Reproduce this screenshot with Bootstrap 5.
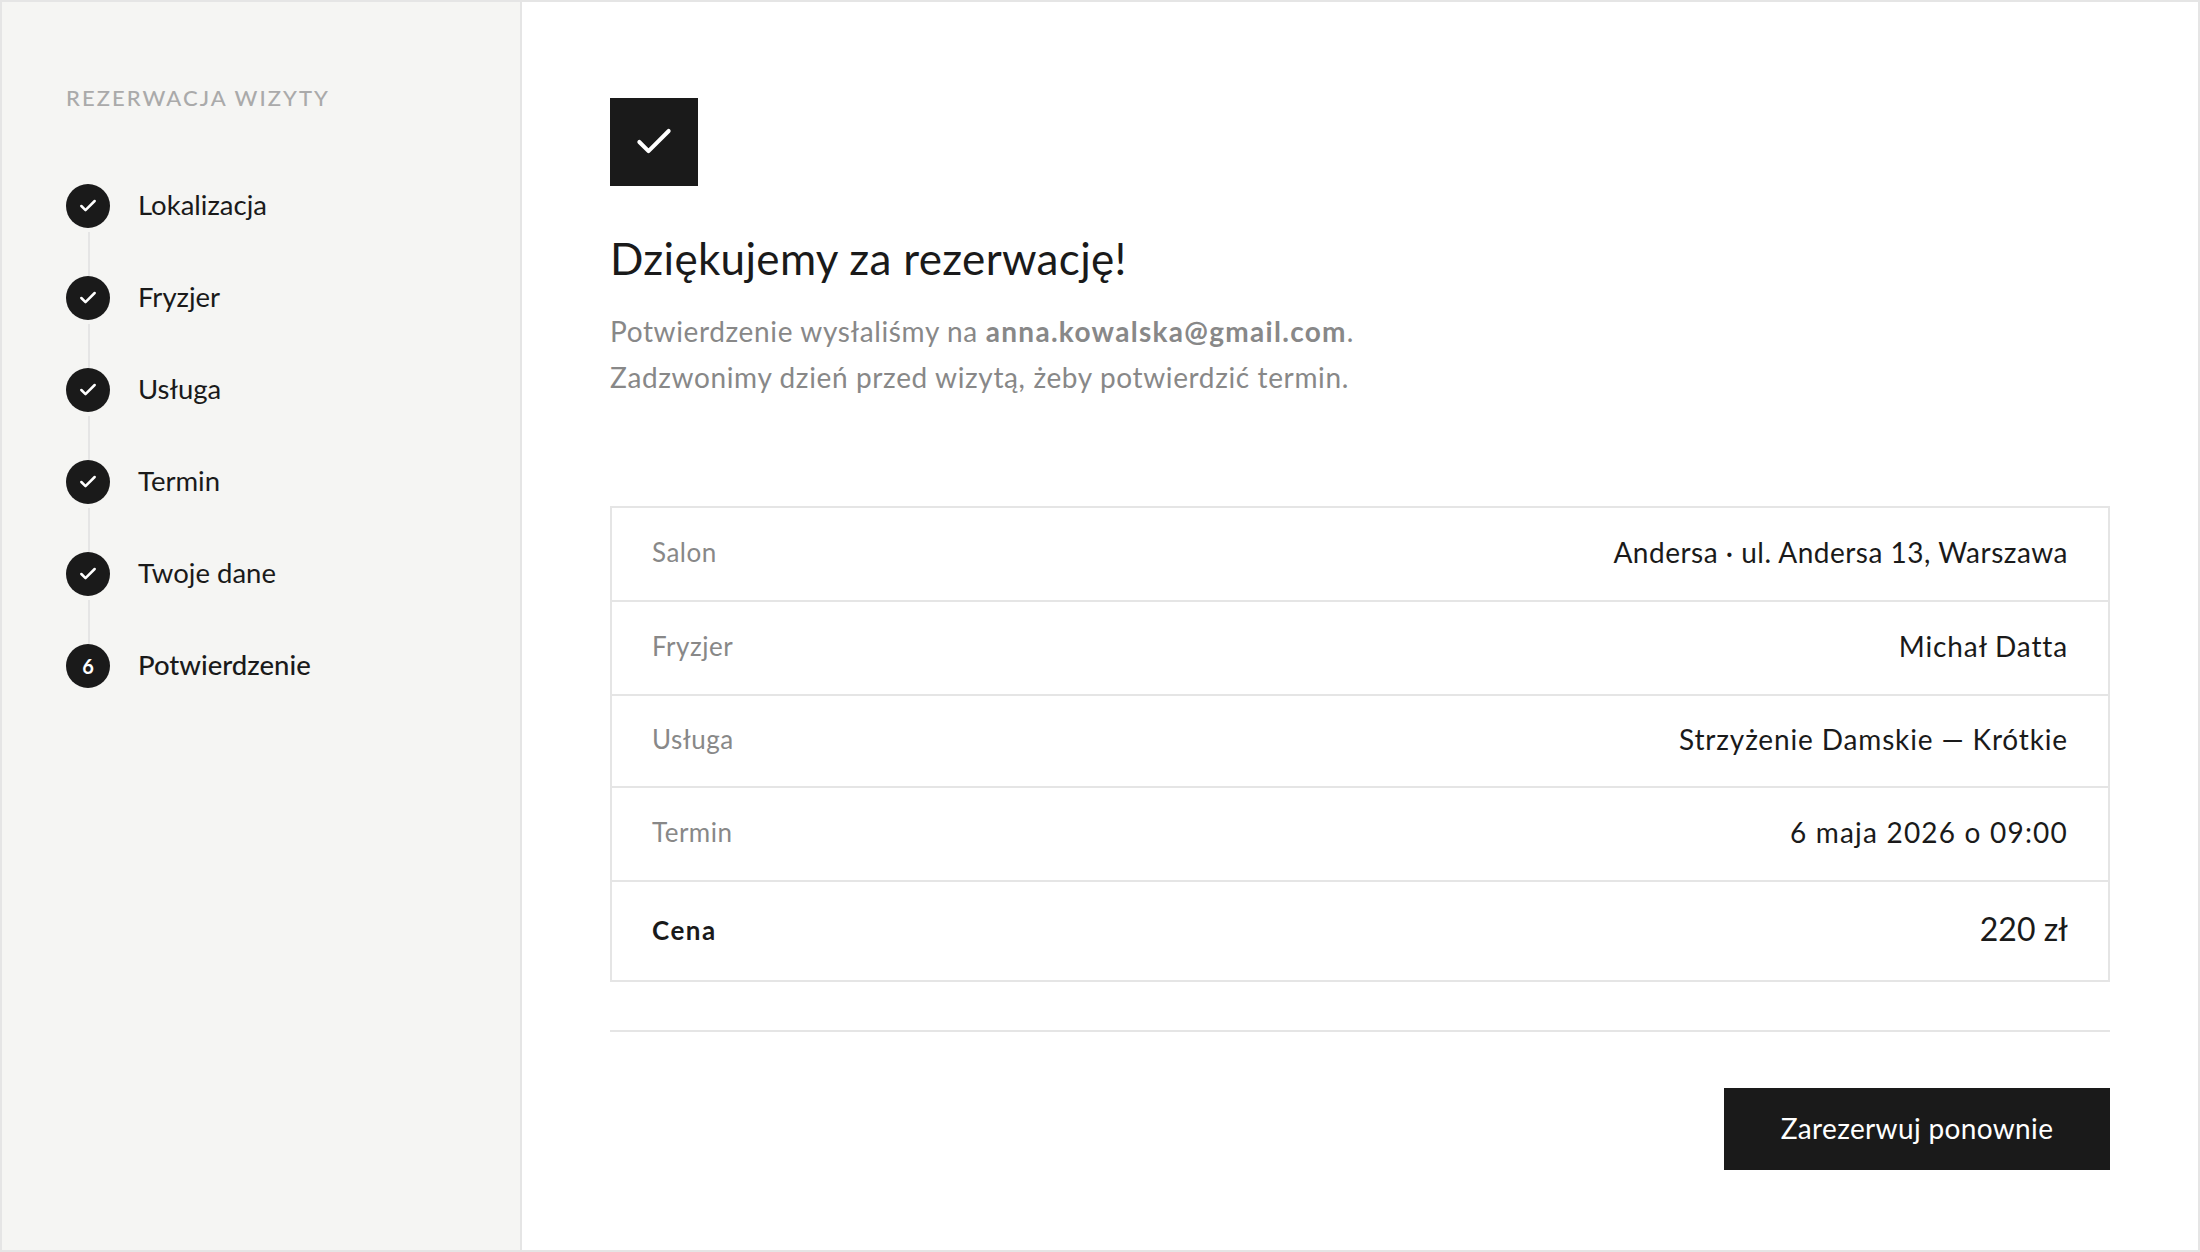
<!DOCTYPE html>
<html lang="pl">
<head>
  <meta charset="UTF-8">
  <meta name="viewport" content="width=device-width, initial-scale=1.0">
  <title>Rezerwacja wizyty</title>
  <link href="https://cdn.jsdelivr.net/npm/bootstrap@5.3.0/dist/css/bootstrap.min.css" rel="stylesheet">
  <style>
    body { font-family: "Lato", "Liberation Sans", sans-serif; color: #1a1a1a; background: #fff; }
    .app-frame { height: 1252px; border: 2px solid #e5e5e5; }
    .side-pane { width: 520px; flex: none; background: #f5f5f3; border-right: 2px solid #e5e5e5; padding: 80px 46px 0 64px; }
    .side-title { font-size: 22px; line-height: 32px; font-weight: 500; letter-spacing: 2.05px; color: #aaa; margin-bottom: 70px; }
    .step-rail { width: 44px; flex: none; }
    .step-dot { width: 44px; height: 44px; flex: none; background: #1a1a1a; color: #fff; font-size: 20px; font-weight: 700; }
    .step-line { width: 2px; height: 44px; margin: 4px 0 0 2px; background: #e5e5e5; }
    .step-name { font-size: 27.5px; line-height: 42px; margin-left: 28px; }
    .step-current { font-weight: 500; }
    .main-pane { padding: 96px 88px 0; }
    .done-box { width: 88px; height: 88px; background: #1a1a1a; }
    .thanks-title { font-size: 44px; line-height: 52px; font-weight: 400; letter-spacing: .32px; margin: 46px 0 24px; }
    .thanks-text { font-size: 28px; line-height: 46px; color: #888; letter-spacing: .63px; margin-bottom: 106px; }
    .thanks-text strong { font-weight: 700; letter-spacing: 1.3px; }
    .detail-list { --bs-list-group-border-color: #e5e5e5; --bs-list-group-border-width: 2px; --bs-list-group-border-radius: 0; --bs-list-group-item-padding-x: 40px; --bs-list-group-item-padding-y: 0; --bs-list-group-color: #1a1a1a; }
    .detail-row { height: 94px; }
    .detail-row:first-child { height: 96px; }
    .detail-row:nth-child(3) { height: 92px; }
    .detail-row:last-child { height: 100px; }
    .detail-label { font-size: 26px; color: #888; letter-spacing: .5px; padding-bottom: 4px; }
    .detail-value { font-size: 28px; letter-spacing: .5px; padding-bottom: 4px; }
    .detail-wide { letter-spacing: .85px; }
    .detail-date { letter-spacing: 1.2px; }
    .price-label { font-size: 26px; font-weight: 700; letter-spacing: 1.5px; padding-bottom: 2px; }
    .price-value { font-size: 32px; padding-bottom: 4px; }
    .foot-rule { height: 2px; background: #e5e5e5; margin: 48px 0 56px; }
    .again-btn { --bs-btn-bg: #1a1a1a; --bs-btn-color: #fff; --bs-btn-border-width: 0; --bs-btn-border-radius: 0; --bs-btn-hover-bg: #333; --bs-btn-hover-color: #fff; width: 386px; height: 82px; padding: 0 0 3px; font-size: 28px; letter-spacing: .35px; }
  </style>
</head>
<body>
<div class="app-frame d-flex">
  <aside class="side-pane">
    <div class="side-title">REZERWACJA WIZYTY</div>
    <div class="d-flex flex-column">
      <div class="d-flex">
        <div class="step-rail d-flex flex-column align-items-center">
          <div class="step-dot rounded-circle d-flex align-items-center justify-content-center"><svg width="20" height="20" viewBox="0 0 24 24" fill="none" stroke="#fff" stroke-width="3" stroke-linecap="round" stroke-linejoin="round"><polyline points="20 6 9 17 4 12"/></svg></div>
          <div class="step-line"></div>
        </div>
        <div class="step-name">Lokalizacja</div>
      </div>
      <div class="d-flex">
        <div class="step-rail d-flex flex-column align-items-center">
          <div class="step-dot rounded-circle d-flex align-items-center justify-content-center"><svg width="20" height="20" viewBox="0 0 24 24" fill="none" stroke="#fff" stroke-width="3" stroke-linecap="round" stroke-linejoin="round"><polyline points="20 6 9 17 4 12"/></svg></div>
          <div class="step-line"></div>
        </div>
        <div class="step-name">Fryzjer</div>
      </div>
      <div class="d-flex">
        <div class="step-rail d-flex flex-column align-items-center">
          <div class="step-dot rounded-circle d-flex align-items-center justify-content-center"><svg width="20" height="20" viewBox="0 0 24 24" fill="none" stroke="#fff" stroke-width="3" stroke-linecap="round" stroke-linejoin="round"><polyline points="20 6 9 17 4 12"/></svg></div>
          <div class="step-line"></div>
        </div>
        <div class="step-name">Usługa</div>
      </div>
      <div class="d-flex">
        <div class="step-rail d-flex flex-column align-items-center">
          <div class="step-dot rounded-circle d-flex align-items-center justify-content-center"><svg width="20" height="20" viewBox="0 0 24 24" fill="none" stroke="#fff" stroke-width="3" stroke-linecap="round" stroke-linejoin="round"><polyline points="20 6 9 17 4 12"/></svg></div>
          <div class="step-line"></div>
        </div>
        <div class="step-name">Termin</div>
      </div>
      <div class="d-flex">
        <div class="step-rail d-flex flex-column align-items-center">
          <div class="step-dot rounded-circle d-flex align-items-center justify-content-center"><svg width="20" height="20" viewBox="0 0 24 24" fill="none" stroke="#fff" stroke-width="3" stroke-linecap="round" stroke-linejoin="round"><polyline points="20 6 9 17 4 12"/></svg></div>
          <div class="step-line"></div>
        </div>
        <div class="step-name">Twoje dane</div>
      </div>
      <div class="d-flex">
        <div class="step-rail d-flex flex-column align-items-center">
          <div class="step-dot rounded-circle d-flex align-items-center justify-content-center">6</div>
        </div>
        <div class="step-name step-current">Potwierdzenie</div>
      </div>
    </div>
  </aside>
  <main class="main-pane flex-grow-1">
    <div class="done-box d-flex align-items-center justify-content-center"><svg width="44" height="44" viewBox="0 0 24 24" fill="none" stroke="#fff" stroke-width="2.2" stroke-linecap="round" stroke-linejoin="round"><polyline points="20 6 9 17 4 12"/></svg></div>
    <h1 class="thanks-title">Dziękujemy za rezerwację!</h1>
    <p class="thanks-text">Potwierdzenie wysłaliśmy na <strong>anna.kowalska@gmail.com</strong>.<br>Zadzwonimy dzień przed wizytą, żeby potwierdzić termin.</p>
    <div class="list-group detail-list">
      <div class="list-group-item detail-row d-flex justify-content-between align-items-center"><span class="detail-label">Salon</span><span class="detail-value">Andersa · ul. Andersa 13, Warszawa</span></div>
      <div class="list-group-item detail-row d-flex justify-content-between align-items-center"><span class="detail-label">Fryzjer</span><span class="detail-value detail-wide">Michał Datta</span></div>
      <div class="list-group-item detail-row d-flex justify-content-between align-items-center"><span class="detail-label">Usługa</span><span class="detail-value detail-wide">Strzyżenie Damskie — Krótkie</span></div>
      <div class="list-group-item detail-row d-flex justify-content-between align-items-center"><span class="detail-label">Termin</span><span class="detail-value detail-date">6 maja 2026 o 09:00</span></div>
      <div class="list-group-item detail-row d-flex justify-content-between align-items-center"><span class="price-label">Cena</span><span class="price-value">220 zł</span></div>
    </div>
    <div class="foot-rule"></div>
    <div class="d-flex justify-content-end">
      <button type="button" class="btn again-btn">Zarezerwuj ponownie</button>
    </div>
  </main>
</div>
<script src="https://cdn.jsdelivr.net/npm/bootstrap@5.3.0/dist/js/bootstrap.bundle.min.js"></script>
</body>
</html>
